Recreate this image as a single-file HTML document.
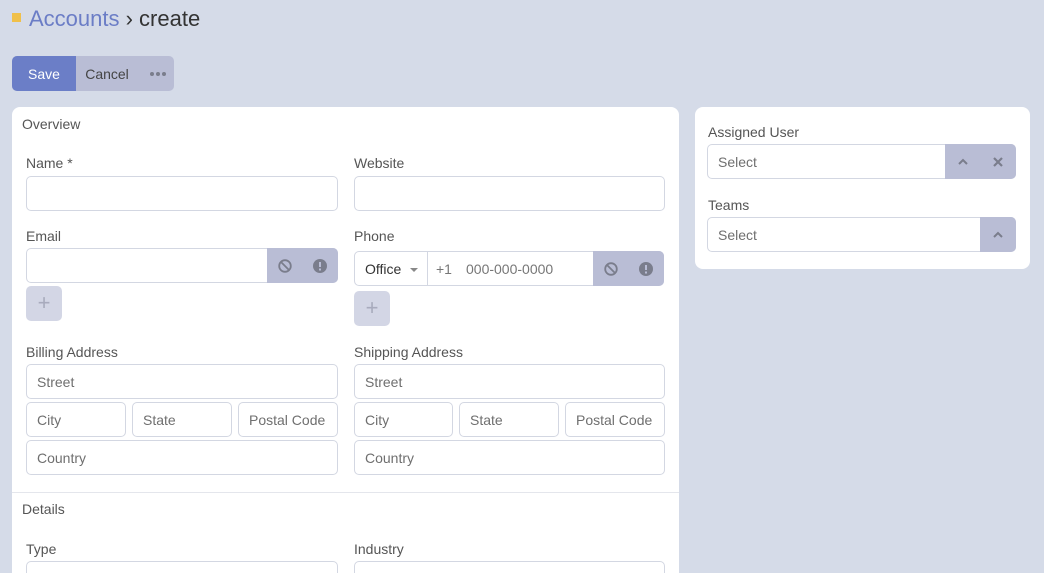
<!DOCTYPE html>
<html style="overflow:hidden;height:573px"><head><style>
*{box-sizing:border-box;margin:0;padding:0}
body{width:1044px;height:573px;overflow:hidden;background:#d5dbe8;font-family:"Liberation Sans",sans-serif;font-size:14px;color:#333;position:relative}
.a{position:absolute}
.panel{position:absolute;background:#fff;border-radius:8px}
.lbl{position:absolute;font-size:14px;color:#555}
.in{position:absolute;border:1px solid #d3d7e2;border-radius:5px;background:#fff;height:35px;color:#6f6f6f;padding:0 10px;line-height:34px;overflow:hidden}
.ad{position:absolute;background:#b9bdd5;color:#7a7d8c;display:flex;align-items:center;justify-content:space-around}
.plus{position:absolute;width:36px;height:35px;border-radius:5px;background:#d3d6e5;color:#a8abbd;font-size:22px;text-align:center;line-height:34px}
</style></head><body>
<div class="a" style="left:12px;top:13px;width:9px;height:9px;background:#f0c04a"></div>
<div class="a" style="left:29px;top:6px;font-size:22px;color:#6b7dc6">Accounts <span style="color:#333">› create</span></div>
<div class="a" style="left:12px;top:56px;width:162px;height:35px;border-radius:5px;background:#b9bdd5;overflow:hidden">
<div class="a" style="left:0;top:0;width:64px;height:35px;background:#6b7ec7;color:#fff;text-align:center;line-height:36px">Save</div>
<div class="a" style="left:64px;top:0;width:62px;height:35px;color:#444;text-align:center;line-height:36px">Cancel</div>
<div class="a" style="left:138px;top:16px;width:16px;height:4px;display:flex;justify-content:space-between"><i style="width:4px;height:4px;border-radius:2px;background:#7a7d8c"></i><i style="width:4px;height:4px;border-radius:2px;background:#7a7d8c"></i><i style="width:4px;height:4px;border-radius:2px;background:#7a7d8c"></i></div>
</div>
<div class="panel" style="left:12px;top:107px;width:667px;height:480px">
<div class="a" style="left:0;top:385px;width:667px;height:1px;background:#e4e6ec"></div>
</div>
<div class="a" style="left:22px;top:116px;color:#555">Overview</div>
<div class="lbl" style="left:26px;top:155px">Name *</div>
<div class="in" style="left:26px;top:176px;width:312px"></div>
<div class="lbl" style="left:354px;top:155px">Website</div>
<div class="in" style="left:354px;top:176px;width:311px"></div>
<div class="lbl" style="left:26px;top:228px">Email</div>
<div class="in" style="left:26px;top:248px;width:312px"></div>
<div class="ad" style="left:267px;top:248px;width:71px;height:35px;border-radius:0 5px 5px 0">
<svg width="14" height="14" viewBox="0 0 14 14"><circle cx="7" cy="7" r="5.8" fill="none" stroke="#7a7d8c" stroke-width="1.8"/><line x1="3" y1="3" x2="11" y2="11" stroke="#7a7d8c" stroke-width="1.8"/></svg>
<svg width="14" height="14" viewBox="0 0 14 14"><circle cx="7" cy="7" r="7" fill="#7a7d8c"/><rect x="6" y="3" width="2" height="5" fill="#b9bdd5"/><rect x="6" y="9.5" width="2" height="2" fill="#b9bdd5"/></svg></div>
<div class="plus" style="left:26px;top:286px">+</div>
<div class="lbl" style="left:354px;top:228px">Phone</div>
<div class="in" style="left:354px;top:251px;width:310px;padding:0"></div>
<div class="a" style="left:365px;top:261px;color:#333">Office</div>
<div class="a" style="left:410px;top:268px;border-left:4px solid transparent;border-right:4px solid transparent;border-top:4px solid #888"></div>
<div class="a" style="left:427px;top:252px;width:1px;height:33px;background:#d3d7e2"></div>
<div class="a" style="left:436px;top:261px;color:#777">+1</div>
<div class="a" style="left:466px;top:261px;color:#777">000-000-0000</div>
<div class="ad" style="left:593px;top:251px;width:71px;height:35px;border-radius:0 5px 5px 0">
<svg width="14" height="14" viewBox="0 0 14 14"><circle cx="7" cy="7" r="5.8" fill="none" stroke="#7a7d8c" stroke-width="1.8"/><line x1="3" y1="3" x2="11" y2="11" stroke="#7a7d8c" stroke-width="1.8"/></svg>
<svg width="14" height="14" viewBox="0 0 14 14"><circle cx="7" cy="7" r="7" fill="#7a7d8c"/><rect x="6" y="3" width="2" height="5" fill="#b9bdd5"/><rect x="6" y="9.5" width="2" height="2" fill="#b9bdd5"/></svg></div>
<div class="plus" style="left:354px;top:291px">+</div>
<div class="lbl" style="left:26px;top:344px">Billing Address</div>
<div class="in" style="left:26px;top:364px;width:312px">Street</div>
<div class="in" style="left:26px;top:402px;width:100px">City</div>
<div class="in" style="left:132px;top:402px;width:100px">State</div>
<div class="in" style="left:238px;top:402px;width:100px">Postal Code</div>
<div class="in" style="left:26px;top:440px;width:312px">Country</div>
<div class="lbl" style="left:354px;top:344px">Shipping Address</div>
<div class="in" style="left:354px;top:364px;width:311px">Street</div>
<div class="in" style="left:354px;top:402px;width:99px">City</div>
<div class="in" style="left:459px;top:402px;width:100px">State</div>
<div class="in" style="left:565px;top:402px;width:100px">Postal Code</div>
<div class="in" style="left:354px;top:440px;width:311px">Country</div>
<div class="a" style="left:22px;top:501px;color:#555">Details</div>
<div class="lbl" style="left:26px;top:541px">Type</div>
<div class="in" style="left:26px;top:561px;width:312px"></div>
<div class="lbl" style="left:354px;top:541px">Industry</div>
<div class="in" style="left:354px;top:561px;width:311px"></div>
<div class="panel" style="left:695px;top:107px;width:335px;height:162px"></div>
<div class="lbl" style="left:708px;top:124px">Assigned User</div>
<div class="in" style="left:707px;top:144px;width:309px">Select</div>
<div class="ad" style="left:945px;top:144px;width:71px;height:35px;border-radius:0 5px 5px 0">
<svg width="12" height="10" viewBox="0 0 12 10"><polyline points="2,7 6,3 10,7" fill="none" stroke="#7a7d8c" stroke-width="2"/></svg>
<svg width="12" height="12" viewBox="0 0 12 12"><path d="M2 2L10 10M10 2L2 10" stroke="#7a7d8c" stroke-width="2.2"/></svg></div>
<div class="lbl" style="left:708px;top:197px">Teams</div>
<div class="in" style="left:707px;top:217px;width:309px">Select</div>
<div class="ad" style="left:980px;top:217px;width:36px;height:35px;border-radius:0 5px 5px 0">
<svg width="12" height="10" viewBox="0 0 12 10"><polyline points="2,7 6,3 10,7" fill="none" stroke="#7a7d8c" stroke-width="2"/></svg></div>
</body></html>
